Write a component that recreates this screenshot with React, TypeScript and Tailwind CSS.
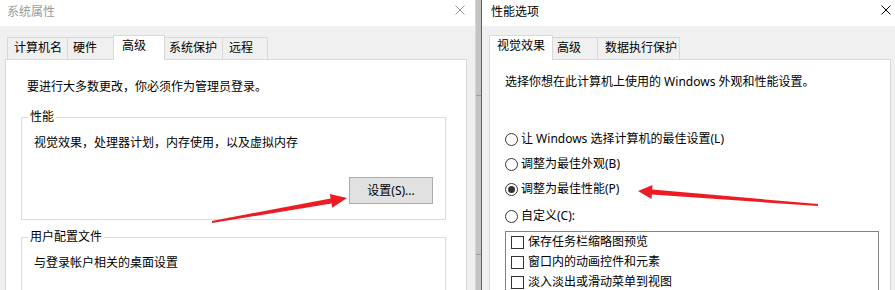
import React from "react";

const Close = ({ color }: { color: string }) => (
  <svg width="10" height="10" viewBox="0 0 10 10" className="mt-[1px] shrink-0">
    <path d="M0.5 0.5 L9.5 9.5 M9.5 0.5 L0.5 9.5" stroke={color} strokeWidth="1" fill="none" />
  </svg>
);

const Radio = ({ checked, label, className }: { checked?: boolean; label: string; className?: string }) => (
  <div className={"flex items-center h-[16px] " + (className ?? "")}>
    <span className="w-[13px] h-[13px] rounded-full border border-[#333] bg-white flex items-center justify-center shrink-0">
      {checked && <span className="w-[7px] h-[7px] rounded-full bg-[#333]" />}
    </span>
    <span className="ml-[3px]">{label}</span>
  </div>
);

const Check = ({ label }: { label: string }) => (
  <div className="flex items-center h-[20px] pl-[5px]">
    <span className="w-[13px] h-[13px] border border-[#333] bg-white shrink-0" />
    <span className="ml-[4px]">{label}</span>
  </div>
);

export default function App() {
  return (
    <div className="relative w-[895px] h-[290px] overflow-hidden flex bg-[#f0f0f0] text-black text-[12px] leading-[16px] font-['Noto_Sans','Noto_Sans_CJK_SC',sans-serif]">
      {/* Left window */}
      <div className="w-[475px] h-[290px] flex flex-col shrink-0 overflow-hidden">
        <div className="h-[26px] shrink-0 bg-white flex items-start justify-between pl-[7px] pr-[10px] pt-[4px] text-[#9a9a9a]">
          <span>系统属性</span>
          <Close color="#999999" />
        </div>
        <div className="shrink-0 flex flex-col pl-[5px] pr-[8px] pt-[9px]">
          <div className="relative z-10 shrink-0 flex items-end h-[25px] ml-[2px] -mb-px">
            <div className="w-[60px] h-[22px] mb-px border-l border-t border-[#d9d9d9] pl-[6px] pt-[2px]">计算机名</div>
            <div className="w-[46px] h-[22px] mb-px border-l border-t border-[#d9d9d9] pl-[5px] pt-[2px]">硬件</div>
            <div className="w-[52px] h-[25px] bg-white border-l border-r border-t border-[#d9d9d9] pl-[8px] pt-[2px]">高级</div>
            <div className="w-[57px] h-[22px] mb-px border-t border-[#d9d9d9] pl-[4px] pt-[2px]">系统保护</div>
            <div className="w-[46px] h-[22px] mb-px border-l border-r border-t border-[#d9d9d9] pl-[6px] pt-[2px]">远程</div>
          </div>
          <div className="shrink-0 h-[260px] bg-white border border-[#d9d9d9] pl-[15px] pr-[20px] pt-[19px]">
            <div className="pl-[6px]">要进行大多数更改，你必须作为管理员登录。</div>
            <fieldset className="mt-[14px] border border-[#dcdcdc] flex flex-col">
              <legend className="ml-[6px] px-[2px]">性能</legend>
              <div className="mt-[10px] pl-[12px]">视觉效果，处理器计划，内存使用，以及虚拟内存</div>
              <div className="flex justify-end mt-[26px] mr-[12px] mb-[15px]">
                <div className="w-[84px] h-[27px] bg-[#e1e1e1] border border-[#adadad] flex items-center justify-center">
                  设置(S)...
                </div>
              </div>
            </fieldset>
            <fieldset className="mt-[9px] border border-[#dcdcdc] h-[80px]">
              <legend className="ml-[6px] px-[2px]">用户配置文件</legend>
              <div className="mt-[10px] pl-[12px]">与登录帐户相关的桌面设置</div>
            </fieldset>
          </div>
        </div>
      </div>

      {/* Separator */}
      <div className="w-[7px] h-[290px] shrink-0 flex flex-col bg-[#c4c4c4] border-l border-l-[#d6d6d6] border-r border-r-[#5f5f5f]">
        <div className="h-[95px] shrink-0" />
        <div className="h-[159px] shrink-0 border-t border-[#9c9c9c]" />
        <div className="flex-1 border-t border-[#9c9c9c]" />
      </div>

      {/* Right window */}
      <div className="flex-1 h-[290px] flex flex-col overflow-hidden">
        <div className="h-[26px] shrink-0 bg-white flex items-start justify-between pl-[9px] pr-[4px] pt-[4px]">
          <span>性能选项</span>
          <Close color="#000000" />
        </div>
        <div className="shrink-0 flex flex-col pl-[7px] pr-[4px] pt-[9px]">
          <div className="relative z-10 shrink-0 flex items-end h-[25px] -mb-px">
            <div className="w-[64px] h-[25px] bg-white border-l border-r border-t border-[#d9d9d9] pl-[7px] pt-[2px]">视觉效果</div>
            <div className="w-[45px] h-[22px] mb-px border-r border-t border-[#d9d9d9] pl-[4px] pt-[2px]">高级</div>
            <div className="w-[82px] h-[22px] mb-px border-r border-t border-[#d9d9d9] pl-[7px] pt-[2px]">数据执行保护</div>
          </div>
          <div className="shrink-0 h-[260px] bg-white border border-[#d9d9d9] pl-[15px] pt-[14px]">
            <div>选择你想在此计算机上使用的 Windows 外观和性能设置。</div>
            <Radio className="mt-[41px]" label="让 Windows 选择计算机的最佳设置(L)" />
            <Radio className="mt-[9px]" label="调整为最佳外观(B)" />
            <Radio className="mt-[9px]" checked label="调整为最佳性能(P)" />
            <Radio className="mt-[11px]" label="自定义(C):" />
            <div className="mt-[7px] w-[374px] h-[80px] border border-[#828282] bg-white">
              <Check label="保存任务栏缩略图预览" />
              <Check label="窗口内的动画控件和元素" />
              <Check label="淡入淡出或滑动菜单到视图" />
            </div>
          </div>
        </div>
      </div>

      {/* Annotation arrows */}
      <svg className="absolute inset-0 pointer-events-none" width="895" height="290" viewBox="0 0 895 290">
        <polygon
          fill="#ec1c24"
          points="211.8,221.0 330.6,198.4 329.8,194.0 347,198 332.2,207.8 331.4,203.4 212.2,223.0"
        />
        <polygon
          fill="#ec1c24"
          points="638,191 652.5,185.1 652.2,189.6 818.1,204.0 817.9,206.0 651.8,194.6 651.5,199.1"
        />
      </svg>
    </div>
  );
}
